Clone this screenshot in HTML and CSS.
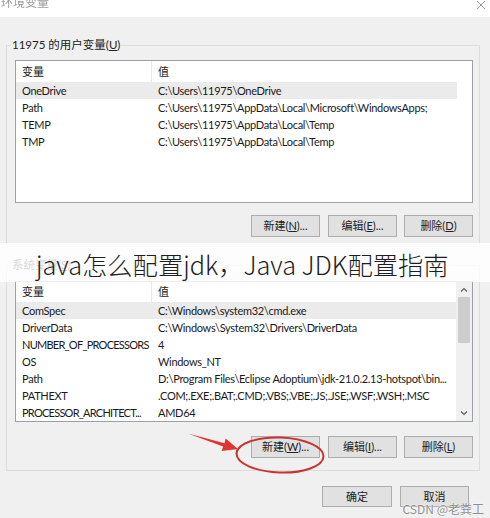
FILE: index.html
```html
<!DOCTYPE html>
<html lang="zh-CN">
<head>
<meta charset="utf-8">
<title>环境变量</title>
<link rel="stylesheet" href="styles.css">
</head>
<body>
<div class="titlebar">
  <span class="title">环境变量</span>
  <svg class="close" width="10" height="10" viewBox="0 0 10 10"><path d="M1 1 L9 9 M9 1 L1 9" stroke="#9a9a9a" stroke-width="1" fill="none"/></svg>
</div>
<div class="dialog">
  <fieldset class="group g1">
    <legend>11975 的用户变量(<u>U</u>)</legend>
    <div class="listbox">
      <div class="table">
        <div class="row head"><span class="c1">变量</span><span>值</span></div>
        <div class="row sel"><span class="c1">OneDrive</span><span>C:\Users\11975\OneDrive</span></div>
        <div class="row"><span class="c1">Path</span><span>C:\Users\11975\AppData\Local\Microsoft\WindowsApps;</span></div>
        <div class="row"><span class="c1">TEMP</span><span>C:\Users\11975\AppData\Local\Temp</span></div>
        <div class="row"><span class="c1">TMP</span><span>C:\Users\11975\AppData\Local\Temp</span></div>
      </div>
    </div>
    <div class="buttons">
      <button class="btn">新建(<u>N</u>)...</button>
      <button class="btn">编辑(<u>E</u>)...</button>
      <button class="btn">删除(<u>D</u>)</button>
    </div>
  </fieldset>
  <fieldset class="group g2">
    <legend>系统变量(<u>S</u>)</legend>
    <div class="listbox">
      <div class="table">
        <div class="row head"><span class="c1">变量</span><span>值</span></div>
        <div class="row sel"><span class="c1">ComSpec</span><span>C:\Windows\system32\cmd.exe</span></div>
        <div class="row"><span class="c1">DriverData</span><span>C:\Windows\System32\Drivers\DriverData</span></div>
        <div class="row"><span class="c1 up">NUMBER_OF_PROCESSORS</span><span>4</span></div>
        <div class="row"><span class="c1">OS</span><span>Windows_NT</span></div>
        <div class="row"><span class="c1">Path</span><span>D:\Program Files\Eclipse Adoptium\jdk-21.0.2.13-hotspot\bin...</span></div>
        <div class="row"><span class="c1">PATHEXT</span><span>.COM;.EXE;.BAT;.CMD;.VBS;.VBE;.JS;.JSE;.WSF;.WSH;.MSC</span></div>
        <div class="row"><span class="c1 up">PROCESSOR_ARCHITECT...</span><span>AMD64</span></div>
      </div>
      <div class="scrollbar">
        <svg class="arrow" width="16" height="16" viewBox="0 0 16 16"><path d="M5 9.5 L8 6.5 L11 9.5" stroke="#606060" stroke-width="1.2" fill="none"/></svg>
        <div class="thumb"></div>
        <div class="track"></div>
        <svg class="arrow" width="16" height="16" viewBox="0 0 16 16"><path d="M5 6.5 L8 9.5 L11 6.5" stroke="#606060" stroke-width="1.2" fill="none"/></svg>
      </div>
    </div>
    <div class="buttons">
      <button class="btn">新建(<u>W</u>)...</button>
      <button class="btn">编辑(<u>I</u>)...</button>
      <button class="btn">删除(<u>L</u>)</button>
    </div>
  </fieldset>
  <div class="footer">
    <button class="btn ok">确定</button>
    <button class="btn">取消</button>
  </div>
</div>
<div class="banner">java怎么配置jdk，Java JDK配置指南</div>
<svg class="annot" width="490" height="518" viewBox="0 0 490 518">
  <polygon points="188,433.5 224.5,443.2 225.6,438.6 238,449 221.6,451 223.1,446.6" fill="#e0342c"/>
  <ellipse cx="280" cy="455" rx="43.5" ry="17.5" transform="rotate(2 280 455)" fill="none" stroke="#c8332e" stroke-width="2"/>
</svg>
<div class="watermark">CSDN @老粪工</div>
</body>
</html>
```
FILE: styles.css
```css
* { box-sizing: border-box; }
html, body { margin: 0; padding: 0; }
body {
  width: 490px;
  height: 518px;
  overflow: hidden;
  position: relative;
  background: #f0f0f0;
  font-family: "Lato", "Noto Sans CJK SC", sans-serif;
  font-size: 11px;
  color: #1a1a1a;
}
.titlebar {
  height: 17px;
  background: #ffffff;
  display: flex;
  justify-content: space-between;
  align-items: flex-start;
  overflow: hidden;
}
.title {
  margin-top: -4px;
  margin-left: 1px;
  font-size: 12px;
  line-height: 14px;
  color: #9a9a9a;
  filter: blur(0.4px);
}
.close { margin: 0 4px 0 0; }
.dialog { display: flex; flex-direction: column; }
.group {
  margin: 0 10px 0 6px;
  border: 1px solid #dcdcdc;
  padding: 7px 6px 9px 8px;
  min-width: 0;
}
.g1 { margin-top: 20px; }
.g2 { margin-top: 10px; padding-top: 8px; padding-bottom: 12px; }
legend {
  font-size: 11.5px;
  line-height: 16px;
  padding: 0 1px;
  margin-left: -4px;
  color: #222;
}
.listbox {
  display: flex;
  border: 1px solid #9ca0a6;
  background: #ffffff;
  height: 143px;
}
.g2 .listbox { height: 141px; }
.table { width: 441px; display: flex; flex-direction: column; }
.row {
  display: grid;
  grid-template-columns: 136px 1fr;
  height: 17px;
  line-height: 17px;
  white-space: nowrap;
  overflow: hidden;
  letter-spacing: -0.3px;
}
.row span { padding-left: 6px; overflow: hidden; }
.row .up { letter-spacing: -0.75px; }
.row.head { height: 20px; line-height: 20px; letter-spacing: 0; }
.row.head .c1 { border-right: 1px solid #e8e8e8; }
.g1 .row.head { height: 21px; line-height: 21px; }
.row.sel { background: #ebebeb; }
.scrollbar {
  width: 16px;
  margin-left: auto;
  background: #f0f0f0;
  display: flex;
  flex-direction: column;
}
.arrow { display: block; flex: none; }
.thumb { height: 46px; margin: -1px 2px 0 2px; background: #cdcdcd; flex: none; }
.track { flex: 1; }
.buttons {
  display: flex;
  justify-content: flex-end;
  gap: 8px;
  margin-top: 12px;
}
.g2 .buttons { margin-top: 14px; }
.btn {
  width: 69px;
  height: 22px;
  padding: 0;
  border: 1px solid #adadad;
  background: #e1e1e1;
  font-family: "Lato", "Noto Sans CJK SC", sans-serif;
  font-size: 11px;
  color: #222;
  line-height: 20px;
}
.buttons .btn:nth-child(2) { margin-right: -1px; }
.footer {
  display: flex;
  justify-content: flex-end;
  gap: 8px;
  margin-top: 15px;
  padding-right: 21px;
}
.footer .btn { height: 21px; width: 69px; }
.footer .ok { width: 70px; }
.banner {
  position: absolute;
  left: 0;
  top: 243px;
  width: 490px;
  height: 39px;
  background: rgba(255, 255, 255, 0.82);
  padding: 6px 0 0 36px;
  font-family: "Noto Sans CJK SC", sans-serif;
  font-weight: 300;
  font-size: 25.3px;
  line-height: 30px;
  color: #1e1e1e;
  white-space: nowrap;
}
.annot { position: absolute; left: 0; top: 0; pointer-events: none; }
.watermark {
  position: absolute;
  right: 6px;
  bottom: 1px;
  font-family: "Noto Sans CJK SC", sans-serif;
  font-size: 12px;
  color: #8e8e8e;
  text-shadow: 0 0 2px #fff, 0 0 1px #fff;
}
```
